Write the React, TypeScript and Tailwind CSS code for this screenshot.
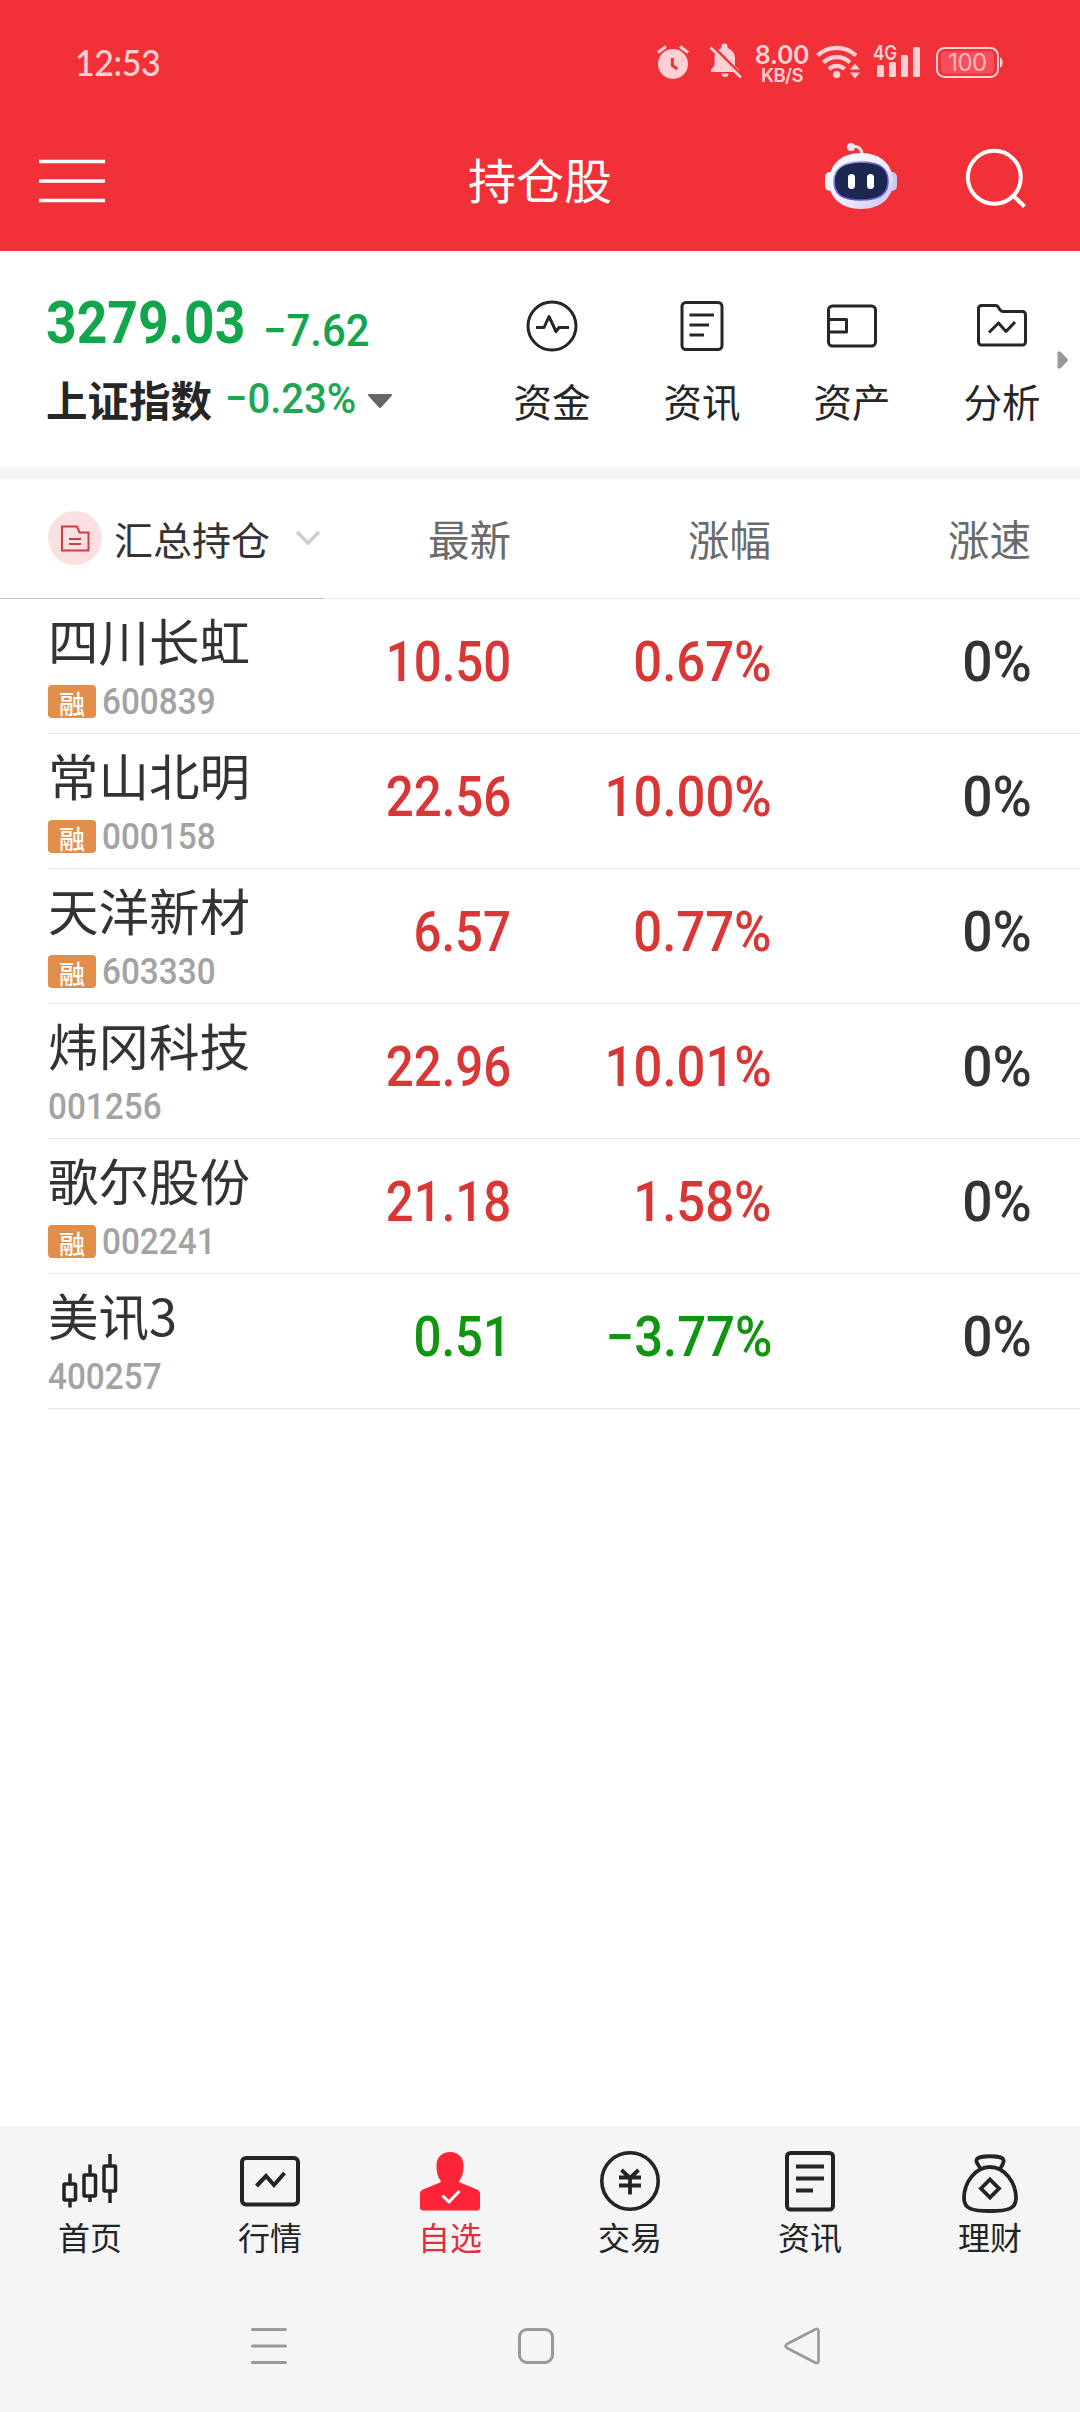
import type { ReactNode } from "react";

const CJK = "font-['Noto_Sans_CJK_SC',sans-serif]";
const NUM = "font-['Roboto',sans-serif]";

type Stock = {
  name: string;
  code: string;
  margin: boolean;
  price: string;
  change: string;
  down?: boolean;
};

const stocks: Stock[] = [
  { name: "四川长虹", code: "600839", margin: true, price: "10.50", change: "0.67%" },
  { name: "常山北明", code: "000158", margin: true, price: "22.56", change: "10.00%" },
  { name: "天洋新材", code: "603330", margin: true, price: "6.57", change: "0.77%" },
  { name: "炜冈科技", code: "001256", margin: false, price: "22.96", change: "10.01%" },
  { name: "歌尔股份", code: "002241", margin: true, price: "21.18", change: "1.58%" },
  { name: "美讯3", code: "400257", margin: false, price: "0.51", change: "−3.77%", down: true },
];

function StatusBar() {
  return (
    <div className="flex h-[110px] items-start justify-between pl-[75px] pr-[76px] pt-[42px] text-[#ffd0d3]">
      <span className="-mt-px inline-block origin-left scale-x-[0.920] font-['Lato',sans-serif] text-[37px] leading-[42px] font-medium tracking-[-0.5px]">
        12:53
      </span>
      <div className="flex h-[42px] items-start">
        <svg className="h-[42px] w-[34px]" viewBox="656 42 34 42" fill="none">
          <circle cx="673" cy="64" r="15" fill="currentColor" />
          <path d="M658 52.5l8-6M688 52.5l-8-6" stroke="currentColor" strokeWidth="3" />
          <path d="M672.3 58v7.5l5 3.5" stroke="#f13038" strokeWidth="3" />
        </svg>
        <svg className="ml-[18px] h-[42px] w-[36px]" viewBox="708 42 36 42" fill="none">
          <path
            d="M711 72v-2.5l3.500-3.500v-8c0-5 3-8.500 7-10v-1.500a3 3 0 0 1 6 0V48c4 1.500 7.500 5 7.500 10v8l4 3.500V72zM721.500 73.500h7a3.500 3.500 0 0 1-7 0z"
            fill="currentColor"
          />
          <path d="M712.500 46l30.500 30.500" stroke="#f13038" strokeWidth="3" />
          <path d="M710.500 47.500l30.500 30" stroke="currentColor" strokeWidth="2.600" />
        </svg>
        <div className="ml-[11px] flex w-[54px] flex-col items-center pt-px font-['Inter',sans-serif]">
          <span className="text-[25px] leading-[24px] font-semibold tracking-[-0.300px]">8.00</span>
          <span className="text-[18.500px] leading-[16px] font-semibold tracking-[-0.500px]">KB/S</span>
        </div>
        <svg className="ml-[5px] h-[42px] w-[48px]" viewBox="814 42 48 42" fill="none">
          <g stroke="currentColor" strokeWidth="4.200">
            <path d="M817.500 55.500a28 28 0 0 1 38.500 0" />
            <path d="M823.500 62.500a19 19 0 0 1 26.500 0" />
            <path d="M829 69a11 11 0 0 1 15.500 0" />
          </g>
          <circle cx="836.700" cy="74.500" r="3.600" fill="currentColor" />
          <path d="M850 69.500l5-6 5 6zM850 72.500l5 6 5-6z" fill="currentColor" />
        </svg>
        <div className="relative ml-[12px] h-[42px] w-[48px]">
          <svg className="h-[42px] w-[48px]" viewBox="874 42 48 42" fill="currentColor">
            <rect x="877" y="65" width="7" height="12" rx="1.500" />
            <rect x="889" y="62" width="7" height="15" rx="1.500" />
            <rect x="901" y="55" width="7" height="22" rx="1.500" />
            <rect x="913" y="47" width="7" height="30" rx="1.500" />
          </svg>
          <span className="absolute top-px -left-px origin-left scale-x-85 font-['Inter',sans-serif] text-[20px] leading-[20px] font-semibold">
            4G
          </span>
        </div>
        <div className="relative ml-[14px] h-[42px] w-[68px]">
          <svg className="h-[42px] w-[68px]" viewBox="936 42 68 42" fill="none">
            <rect x="937" y="48" width="61" height="29" rx="7.500" stroke="currentColor" strokeWidth="2" />
            <rect x="941" y="51.500" width="53" height="22" rx="4" fill="#f5505a" />
            <path d="M1000 57.500c3.500.5 3.500 9.500 0 10z" fill="currentColor" />
          </svg>
          <span className="absolute inset-x-0 top-[9px] w-[63px] text-center font-['Inter',sans-serif] text-[24px] leading-[24px] tracking-[-0.500px] text-[#ffb8bc]">
            100
          </span>
        </div>
      </div>
    </div>
  );
}

function Robot() {
  return (
    <svg className="h-[70px] w-[76px]" viewBox="823 141 76 70" fill="none">
      <defs>
        <linearGradient id="shell" x1="0" y1="0" x2="1" y2="1">
          <stop offset="0" stopColor="#ffffff" />
          <stop offset="0.600" stopColor="#ecebff" />
          <stop offset="1" stopColor="#c3bdf2" />
        </linearGradient>
        <linearGradient id="rim" x1="0" y1="0" x2="1" y2="1">
          <stop offset="0" stopColor="#a6dcf5" />
          <stop offset="0.500" stopColor="#6a3be0" />
          <stop offset="1" stopColor="#5d62e8" />
        </linearGradient>
      </defs>
      <path d="M852 147c6-1.500 10 1.500 10 8" stroke="#f6dfee" strokeWidth="3" />
      <circle cx="851" cy="147" r="4" fill="#f6e4f2" />
      <rect x="825" y="172" width="10" height="19" rx="5" fill="#f2f0fd" />
      <rect x="887" y="172" width="10" height="19" rx="5" fill="#cdc6f2" />
      <path
        d="M861 153c20 0 32 12 32 29 0 16-13 27-32 27s-32-11-32-27c0-17 12-29 32-29z"
        fill="url(#shell)"
      />
      <path
        d="M861 162c18 0 27 6 27 19s-8 19-27 19-27-6-27-19 9-19 27-19z"
        fill="#1c2850"
        stroke="url(#rim)"
        strokeWidth="1.600"
      />
      <rect x="848" y="174" width="7" height="15" rx="3.500" fill="#fff" />
      <rect x="867" y="174" width="7" height="15" rx="3.500" fill="#fff" />
    </svg>
  );
}

function TitleBar() {
  return (
    <div className="flex h-[141px] items-start text-white">
      <svg className="mt-[46px] ml-[39px] h-[50px] w-[66px]" viewBox="39 156 66 50" stroke="currentColor" strokeWidth="3.600">
        <path d="M39 161.500h66M39 181h66M39 200.500h66" />
      </svg>
      <h1 className={`${CJK} mt-[33px] ml-[363px] w-[146px] text-[48px] leading-[70px] whitespace-nowrap`}>持仓股</h1>
      <div className="mt-[31px] ml-[209px]">
        <Robot />
      </div>
      <svg className="mt-[34px] ml-[65px] h-[68px] w-[68px]" viewBox="964 144 68 68" fill="none" stroke="currentColor" strokeWidth="4">
        <circle cx="994.300" cy="177.300" r="26.500" />
        <path d="M1013.500 196l11 10.500" />
      </svg>
    </div>
  );
}

function Shortcut({ label, children }: { label: string; children: ReactNode }) {
  return (
    <div className="flex w-[150px] shrink-0 flex-col items-center">
      <svg
        className="h-[56px] w-[56px]"
        viewBox="0 0 56 56"
        fill="none"
        stroke="currentColor"
        strokeWidth="3"
        strokeLinejoin="round"
      >
        {children}
      </svg>
      <span className={`${CJK} mt-[18px] text-[38.500px] leading-[56px]`}>{label}</span>
    </div>
  );
}

function IndexPanel() {
  return (
    <section className="flex h-[216px] bg-white text-[#262626]">
      <div className="w-[477px] shrink-0 pl-[46px]">
        <div className="flex h-[102px] items-start pt-[42px] text-[#11a64c]">
          <span className={`${NUM} w-[217px] text-[59px] leading-[60px] font-bold`}>
            <span className="inline-block origin-left scale-x-[0.905]">3279.03</span>
          </span>
          <span className={`${NUM} pt-[8px] text-[45px] leading-[60px] font-medium`}>
            <span className="inline-block origin-left scale-x-[0.930]">−7.62</span>
          </span>
        </div>
        <div className="mt-[16px] flex h-[60px] items-center">
          <span className={`${CJK} w-[179px] text-[41.500px] leading-[60px] font-bold`}>上证指数</span>
          <span className={`${NUM} h-[60px] w-[142px] text-[42px] leading-[60px] font-medium text-[#1fa653]`}>
            <span className="inline-block origin-left scale-x-[0.952]">−0.23%</span>
          </span>
          <svg className="mt-[4px] h-[16px] w-[26px]" viewBox="0 0 26 16" fill="#666" stroke="#666" strokeWidth="2" strokeLinejoin="round">
            <path d="M2 2h22L13 14z" />
          </svg>
        </div>
      </div>
      <div className="flex w-[580px] shrink-0 pt-[47px]">
        <Shortcut label="资金">
          <circle cx="28" cy="28" r="24" />
          <path d="M12 29.500h8l5-11 7 15 3-4h10" />
        </Shortcut>
        <Shortcut label="资讯">
          <rect x="8" y="4.500" width="40" height="47" rx="4" />
          <path d="M15.500 17H40M15.500 27H35M15.500 37H30" />
        </Shortcut>
        <Shortcut label="资产">
          <rect x="4.500" y="8" width="47" height="40" rx="4" />
          <path d="M4.500 21.500h18V34h-18" />
        </Shortcut>
        <Shortcut label="分析">
          <path d="M7.500 7.500H22c3 0 3 6 7 6h19.500a3 3 0 0 1 3 3V44a3 3 0 0 1-3 3h-41a3 3 0 0 1-3-3V10.500a3 3 0 0 1 3-3z" />
          <path d="M15 34.500l9.500-9.500 7.500 8.500 9-9.500" />
        </Shortcut>
      </div>
      <svg className="mt-[100px] h-[18px] w-[12px] shrink-0" viewBox="0 0 12 18" fill="#999" stroke="#999" strokeWidth="2" strokeLinejoin="round">
        <path d="M1.500 1.500v15l1.500 0 7-7.500-7-7.500z" />
      </svg>
    </section>
  );
}

function TableHeader() {
  return (
    <div
      className={`${CJK} grid h-[120px] grid-cols-[324px_187px_260px_260px] text-[41.500px] leading-[118px] text-[#6b6b6b] shadow-[inset_0_-1px_0_#e8e8e8]`}
    >
      <div className="flex items-center border-b border-[#c6c6c6] pl-[48px] text-[#333]">
        <span className="-mt-[2px] flex h-[54px] w-[54px] items-center justify-center rounded-full bg-[#fbe0e1]">
          <svg className="h-[30px] w-[30px]" viewBox="0 0 30 30" fill="none" stroke="#cf3d3f" strokeWidth="2">
            <path d="M2 3.500h15l2.500 6H28.500V27.500H2zM9 16h12M9 21h12" />
          </svg>
        </span>
        <span className="-mt-px ml-[12px] text-[39px] leading-[116px]">汇总持仓</span>
        <svg className="-mt-[2px] ml-[24px] h-[18px] w-[28px]" viewBox="0 0 28 18" fill="none" stroke="#cdcdcd" strokeWidth="3.500">
          <path d="M3 3l11 11L25 3" />
        </svg>
      </div>
      <div className="text-right">最新</div>
      <div className="text-right">涨幅</div>
      <div className="text-right">涨速</div>
    </div>
  );
}

function StockRow({ stock }: { stock: Stock }) {
  const tone = stock.down ? "text-[#0f950f]" : "text-[#d93636]";
  return (
    <li className="ml-[48px] grid h-[135px] grid-cols-[276px_187px_261px_260px] border-b border-[#e8e8e8]">
      <div className="pt-[11px]">
        <div className={`${CJK} text-[50.500px] leading-[58px] text-[#333]`}>{stock.name}</div>
        <div className="mt-[17px] flex h-[33px] items-center">
          {stock.margin && (
            <span className={`${CJK} mr-[6px] h-[33px] w-[48px] rounded-[4px] bg-[#e28e4b] text-center text-[26px] leading-[35px] font-medium text-white`}>
              融
            </span>
          )}
          <span className={`${NUM} inline-block origin-left scale-x-[0.900] text-[37px] leading-[33px] font-medium text-[#a3a3a3]`}>
            {stock.code}
          </span>
        </div>
      </div>
      <div className={`${NUM} ${tone} text-right text-[55px] leading-[126px] font-medium`}>
        <span className="inline-block origin-right scale-x-[0.895]">{stock.price}</span>
      </div>
      <div className={`${NUM} ${tone} text-right text-[55px] leading-[126px] font-medium`}>
        <span className="inline-block origin-right scale-x-[0.925]">{stock.change}</span>
      </div>
      <div className={`${NUM} text-right text-[55px] leading-[126px] font-medium text-[#333]`}>
        <span className="inline-block origin-right scale-x-[0.970]">0%</span>
      </div>
    </li>
  );
}

function Tab({ label, active, children }: { label: string; active?: boolean; children: ReactNode }) {
  return (
    <div className={`flex w-[180px] flex-col items-center pt-[23px] ${active ? "text-[#ff2538]" : "text-[#242424]"}`}>
      <svg className="h-[64px] w-[64px]" viewBox="0 0 64 64" fill="none" stroke="currentColor" strokeWidth="4" strokeLinejoin="round">
        {children}
      </svg>
      <span className={`${CJK} text-[32px] leading-[46px] ${active ? "text-[#e0303f]" : ""}`}>{label}</span>
    </div>
  );
}

function TabBar() {
  return (
    <nav className="flex h-[150px]">
      <Tab label="首页">
        <g strokeWidth="3.500">
          <rect x="6" y="35" width="11.500" height="16" rx="1" />
          <rect x="26" y="26" width="11.500" height="21" rx="1" />
          <rect x="46" y="17" width="11.500" height="25" rx="1" />
          <path d="M12 24.500V34M12 52v6.500M32 15.500V25M32 48v5M52 5v11M52 43v11" />
        </g>
      </Tab>
      <Tab label="行情">
        <rect x="4" y="9" width="56" height="46.500" rx="4" />
        <path d="M18.500 37L28 27l8 9L46.500 24" strokeLinejoin="miter" />
      </Tab>
      <Tab label="自选" active>
        <path
          d="M32 3c8 0 13.500 5.500 13.500 13 0 7-1 12-4.500 16l1 1.500 17 7q3 1.500 3 4.500v13.500a3 3 0 0 1-3 3H5a3 3 0 0 1-3-3V45q0-3 3-4.500l17-7 1-1.500c-3.500-4-4.500-9-4.500-16C18.500 8.500 24 3 32 3z"
          fill="currentColor"
          stroke="none"
        />
        <path d="M24.500 46.500l6.500 6.500L41.500 42" stroke="#fff" strokeWidth="3" />
      </Tab>
      <Tab label="交易">
        <circle cx="32" cy="32" r="28.200" strokeWidth="3.600" />
        <path d="M21 28.500h22M21 36.500h22M32 29v16.500M23.500 21l8.500 8 8.500-8" strokeWidth="3.800" strokeLinejoin="miter" />
      </Tab>
      <Tab label="资讯">
        <rect x="9" y="4" width="46" height="56.500" rx="3.500" />
        <path d="M18 17.500h28M18 29.500h28M18 41.500h17" strokeWidth="3.800" />
      </Tab>
      <Tab label="理财">
        <g strokeWidth="3.800">
          <path d="M22.500 20.500c0-3-5-6-4-9.500C19.500 6 44.500 6 45.500 11c1 3.500-3 6.500-3.500 9.500" />
          <path d="M32 18c15 0 26 16 26 31 0 11-8 13-26 13S6 60 6 49C6 34 17 18 32 18z" />
          <path d="M32 30.500l9 9-9 9-9-9z" strokeLinejoin="miter" />
        </g>
      </Tab>
    </nav>
  );
}

function SystemNav() {
  return (
    <div className="flex h-[136px] items-start justify-center gap-[227px] pt-[50px] pr-[8px]">
      <svg className="h-[40px] w-[40px]" viewBox="0 0 40 40" stroke="#999" strokeWidth="3" strokeLinecap="round">
        <path d="M3.500 3.500h33M3.500 20h33M3.500 36.500h33" />
      </svg>
      <svg className="h-[40px] w-[40px]" viewBox="0 0 40 40" fill="none" stroke="#999" strokeWidth="3">
        <rect x="3.500" y="3.500" width="33" height="33" rx="7.500" />
      </svg>
      <svg className="h-[40px] w-[40px]" viewBox="0 0 40 40" fill="none" stroke="#999" strokeWidth="2.600" strokeLinejoin="round">
        <path d="M32 3.500q3.500-1.500 3.500 2V34.500q0 3.500-3.500 2L4 22q-3-2 0-4z" />
      </svg>
    </div>
  );
}

export default function App() {
  return (
    <div className="flex h-[2412px] w-[1080px] flex-col overflow-hidden bg-white">
      <header className="h-[251px] shrink-0 bg-[#f13038]">
        <StatusBar />
        <TitleBar />
      </header>
      <IndexPanel />
      <div className="h-[12px] shrink-0 bg-[#f4f4f4]" />
      <main className="flex-1">
        <TableHeader />
        <ul>
          {stocks.map((s) => (
            <StockRow key={s.code} stock={s} />
          ))}
        </ul>
      </main>
      <footer className="h-[286px] shrink-0 bg-[#f5f5f5]">
        <TabBar />
        <SystemNav />
      </footer>
    </div>
  );
}
